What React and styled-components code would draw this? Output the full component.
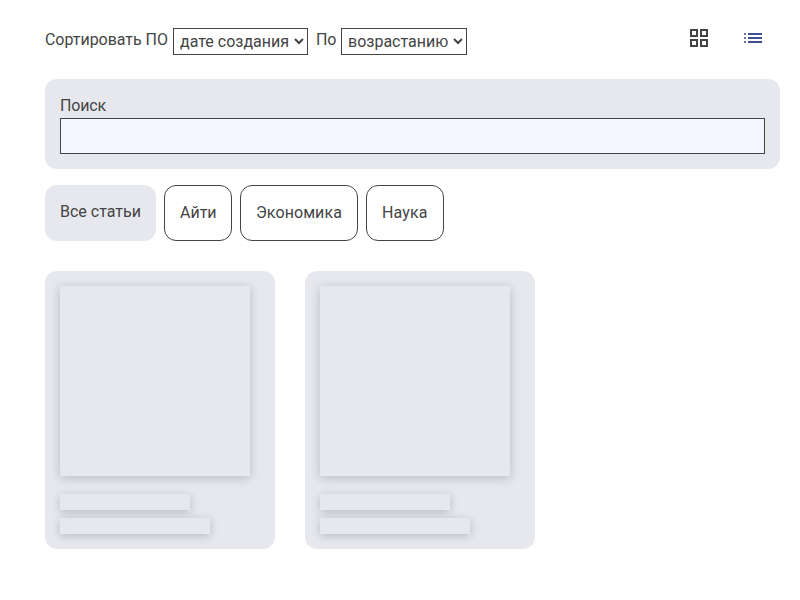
import React from 'react';
import styled, { createGlobalStyle } from 'styled-components';

const Global = createGlobalStyle`
  * { box-sizing: border-box; margin: 0; padding: 0; }
  body { font: 16px/24px Roboto, sans-serif; color: #444; background: #fff; }
`;
const Page = styled.main`padding: 20px 20px 20px 45px;`;
const Toolbar = styled.div`display: flex; justify-content: space-between; height: 43px;`;
const Sort = styled.div`display: flex; gap: 8px; padding-top: 8px;`;
const Label = styled.label`display: flex; align-items: flex-start; justify-content: space-between; width: ${p => p.$w}px;`;
const Caption = styled.span`white-space: nowrap; letter-spacing: -.04px;`;
const Select = styled.select`
  font: 16px Roboto, sans-serif; color: #444; background: #fff;
  border: 1px solid #444; border-radius: 0; width: ${p => p.$w}px; height: 27px; padding: 2px;
`;
const Views = styled.div`display: flex; gap: 30px; padding: 6px 15px 0 0;`;
const View = styled.button`
  display: flex; width: 24px; height: 24px; border: 0; background: none;
  color: ${p => p.$active ? '#444' : '#3f4e93'};
`;
const Search = styled.section`
  display: flex; flex-direction: column; height: 90px; margin-top: 16px; padding: 15px;
  border-radius: 12px; background: #e7e8ee;
`;
const SearchLabel = styled.label`letter-spacing: -.15px;`;
const Input = styled.input`height: 36px; border: 1px solid #444; background: #f3f6ff; outline: 0; padding: 5px;`;
const Tabs = styled.div`display: flex; gap: 8px; margin-top: 16px;`;
const Tab = styled.button`
  width: ${p => p.$w}px; height: 56px; padding: ${p => p.$active ? '0 0 2px 15px' : '0 0 0 15px'}; border-radius: 12px;
  border: ${p => p.$active ? '0' : '1px solid #444'};
  background: ${p => p.$active ? '#e7e8ee' : '#fff'};
  color: #444; font: 16px/24px Roboto, sans-serif; white-space: nowrap; text-align: left;
  letter-spacing: ${p => p.$spacing || 0}px;
`;
const Cards = styled.div`display: flex; gap: 30px; margin-top: 30px;`;
const Card = styled.article`
  width: 230px; height: 278px; padding: 15px; border-radius: 12px; background: #e7e8ee;
`;
const Skeleton = styled.div`
  width: ${p => p.$w}px; height: ${p => p.$h}px; margin-top: ${p => p.$top || 0}px;
  background: #e7e8ee; box-shadow: 0 2px 10px 0 rgba(0,0,0,.2);
`;

const tabs = [['Айти', 68, 0], ['Экономика', 118, .08], ['Наука', 78, .15]];

export default function App() {
  return <><Global /><Page>
    <Toolbar>
      <Sort>
        <Label $w={263}><Caption>Сортировать ПО</Caption><Select $w={135}><option>дате создания</option></Select></Label>
        <Label $w={151}><Caption>По</Caption><Select $w={126}><option>возрастанию</option></Select></Label>
      </Sort>
      <Views>
        <View $active aria-label="Плитка"><svg width="24" height="24" viewBox="0 0 24 24" fill="none" stroke="currentColor" strokeWidth="2"><path d="M4 4h6v6H4zM14 4h6v6h-6zM4 14h6v6H4zM14 14h6v6h-6z" /></svg></View>
        <View aria-label="Список"><svg width="24" height="24" viewBox="0 0 24 24" fill="currentColor"><path opacity=".8" d="M3 7h2v2H3zM3 11h2v2H3zM3 15h2v2H3z" /><path d="M7 7h14v2H7zM7 11h14v2H7zM7 15h14v2H7z" /></svg></View>
      </Views>
    </Toolbar>
    <Search><SearchLabel htmlFor="search">Поиск</SearchLabel><Input id="search" /></Search>
    <Tabs><Tab $active $w={111}>Все статьи</Tab>{tabs.map(([t, w, s]) => <Tab key={t} $w={w} $spacing={s}>{t}</Tab>)}</Tabs>
    <Cards>{[0, 1].map(i => <Card key={i}>
      <Skeleton $w={190} $h={190} /><Skeleton $w={130} $h={16} $top={18} /><Skeleton $w={150} $h={16} $top={8} />
    </Card>)}</Cards>
  </Page></>;
}
